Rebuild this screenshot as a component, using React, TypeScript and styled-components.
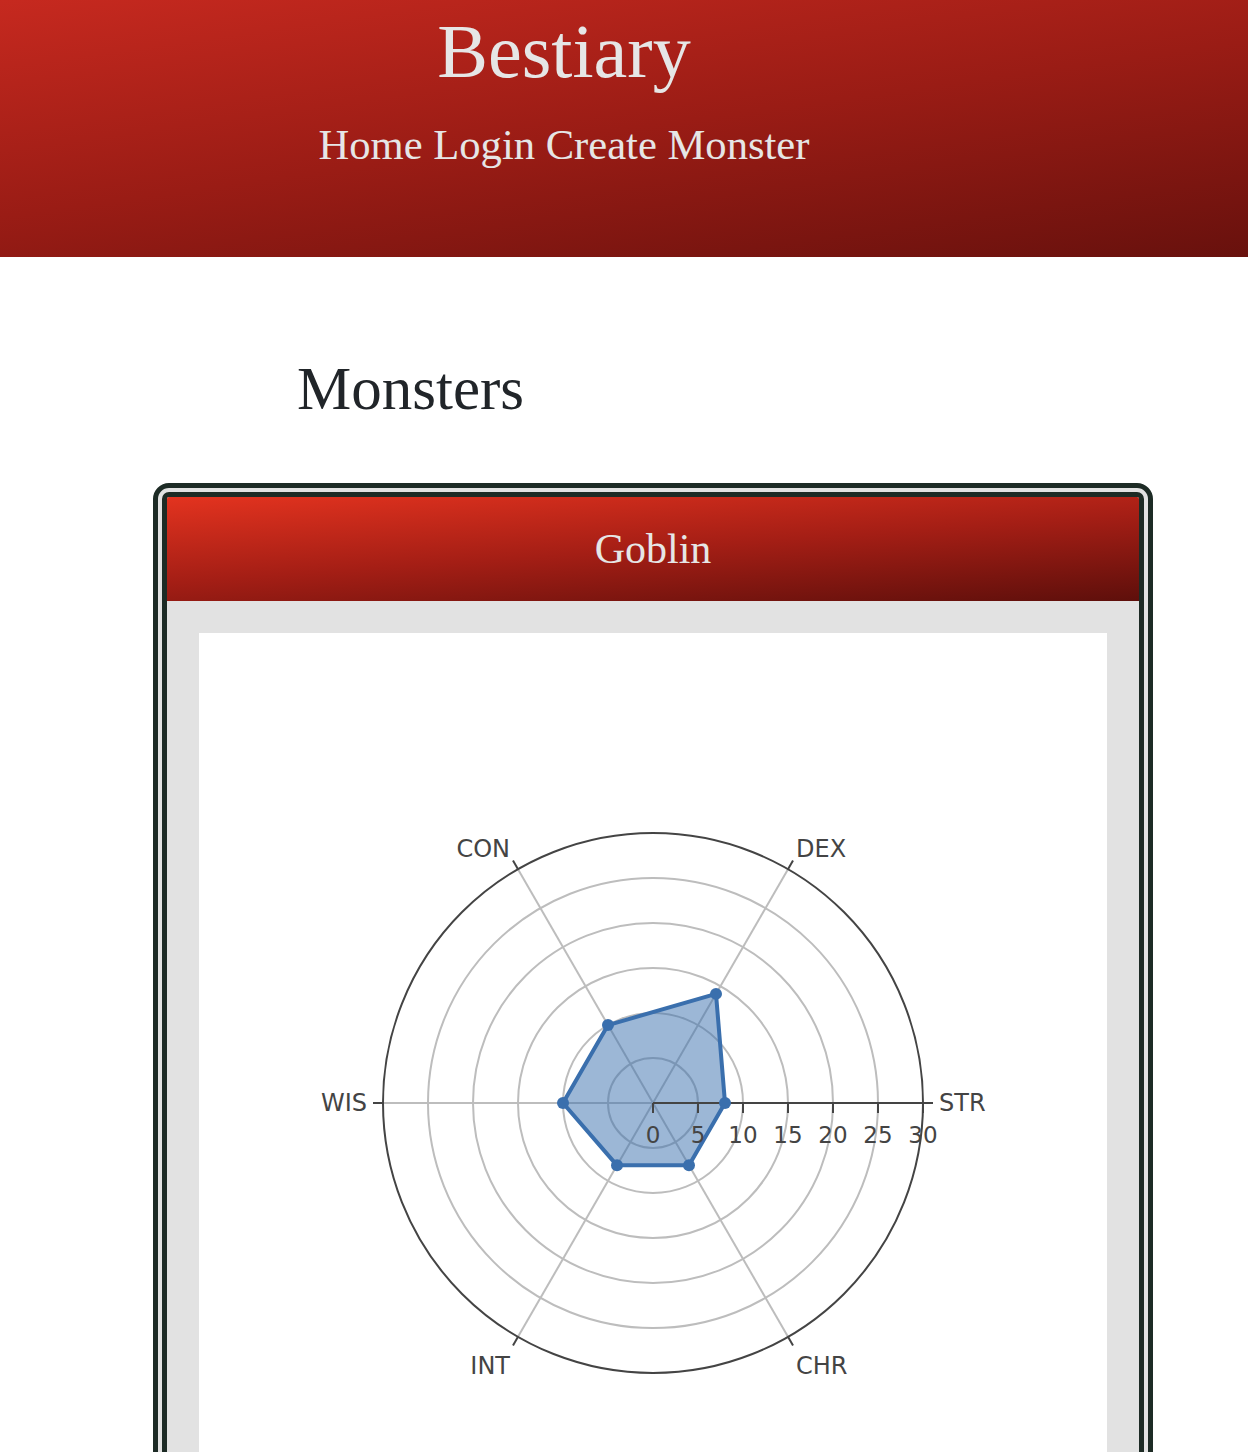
import styled, { createGlobalStyle } from "styled-components";

const GlobalStyle = createGlobalStyle`
  body {
    margin: 0;
    background: #fff;
    font-family: "Liberation Serif", "Times New Roman", serif;
    color: #212529;
  }
`;

const SiteHeader = styled.header`
  height: 257px;
  box-sizing: border-box;
  padding: 8px 120px 0 0;
  background: linear-gradient(172deg, #c6291f 0%, #9a1c15 50%, #68110d 100%);
  text-align: center;
  color: #e6e6e6;
`;

const SiteTitle = styled.h1`
  margin: 0;
  font-size: 76px;
  font-weight: 400;
  line-height: 1.15;
`;

const Nav = styled.nav`
  margin-top: 26px;
  font-size: 42.6px;
  line-height: 1.15;
`;

const NavLink = styled.a`
  color: inherit;
  text-decoration: none;
`;

const Main = styled.main`
  width: 1000px;
  margin: 0 0 0 153px;
  padding-top: 97px;
`;

const PageTitle = styled.h2`
  margin: 0 0 59px 0;
  padding-left: 144px;
  font-size: 61px;
  font-weight: 400;
  line-height: 1.15;
  color: #212529;
`;

const Card = styled.section`
  border: 5px solid #1d2b25;
  border-radius: 16px;
  padding: 4px;
  background: #e2e2e2;
`;

const CardInner = styled.div`
  border: 5px solid #1d2b25;
  border-radius: 7px;
  overflow: hidden;
  background: #e2e2e2;
`;

const CardHeader = styled.div`
  height: 104px;
  display: flex;
  align-items: center;
  justify-content: center;
  background: linear-gradient(176deg, #e3331f 0%, #a41e15 50%, #5e0f0b 100%);
  color: #e6e6e6;
  font-size: 42px;
  line-height: 1;
`;

const CardBody = styled.div`
  padding: 32px;
`;

const ChartPanel = styled.div`
  background: #fff;
  height: 940px;
`;

type Stat = { label: string; value: number };

const stats: Stat[] = [
  { label: "STR", value: 8 },
  { label: "DEX", value: 14 },
  { label: "CON", value: 10 },
  { label: "WIS", value: 10 },
  { label: "INT", value: 8 },
  { label: "CHR", value: 8 },
];

const RadarChart = ({ data }: { data: Stat[] }) => {
  const cx = 454;
  const cy = 470;
  const R = 270;
  const max = 30;
  const scale = R / max;
  const rings = [5, 10, 15, 20, 25];
  const pt = (i: number, v: number) => {
    const a = (i * 60 * Math.PI) / 180;
    return [cx + v * scale * Math.cos(a), cy - v * scale * Math.sin(a)];
  };
  const poly = data.map((d, i) => pt(i, d.value).join(",")).join(" ");

  return (
    <svg width="908" height="940" viewBox="0 0 908 940">
      {rings.map((r) => (
        <circle key={r} cx={cx} cy={cy} r={r * scale} fill="none" stroke="#bdbdbd" strokeWidth="2" />
      ))}
      {data.map((d, i) => {
        const [x, y] = pt(i, max);
        return <line key={d.label} x1={cx} y1={cy} x2={x} y2={y} stroke="#bdbdbd" strokeWidth="2" />;
      })}
      <polygon points={poly} fill="rgba(58,111,173,0.5)" stroke="#3a6fad" strokeWidth="4" strokeLinejoin="round" />
      <circle cx={cx} cy={cy} r={R} fill="none" stroke="#444" strokeWidth="2" />
      {data.map((d, i) => {
        const a = (i * 60 * Math.PI) / 180;
        const c = Math.cos(a);
        const s = Math.sin(a);
        const lx = cx + c * 280 + c * 6;
        const ly = s > 0.1 ? cy - 280 * s - 4 : s < -0.1 ? cy - 280 * s + 29 : cy + 8;
        const anchor = c > 0.1 ? "start" : c < -0.1 ? "end" : "middle";
        return (
          <g key={d.label}>
            <line
              x1={cx + R * c}
              y1={cy - R * s}
              x2={cx + (R + 10) * c}
              y2={cy - (R + 10) * s}
              stroke="#444"
              strokeWidth="2"
            />
            <text x={lx} y={ly} textAnchor={anchor} fontSize="24" fill="#444" fontFamily="'DejaVu Sans', Verdana, sans-serif">
              {d.label}
            </text>
          </g>
        );
      })}
      <line x1={cx} y1={cy} x2={cx + R} y2={cy} stroke="#444" strokeWidth="2" />
      {[0, 5, 10, 15, 20, 25, 30].map((v) => (
        <g key={v}>
          <line x1={cx + v * scale} y1={cy} x2={cx + v * scale} y2={cy + 10} stroke="#444" strokeWidth="2" />
          <text x={cx + v * scale} y={cy + 40} textAnchor="middle" fontSize="23" fill="#444" fontFamily="'DejaVu Sans', Verdana, sans-serif">
            {v}
          </text>
        </g>
      ))}
      {data.map((d, i) => {
        const [x, y] = pt(i, d.value);
        return <circle key={d.label} cx={x} cy={y} r="6" fill="#3a6fad" />;
      })}
    </svg>
  );
};

export default function App() {
  return (
    <>
      <GlobalStyle />
      <SiteHeader>
        <SiteTitle>Bestiary</SiteTitle>
        <Nav>
          <NavLink href="#">Home</NavLink> <NavLink href="#">Login</NavLink>{" "}
          <NavLink href="#">Create Monster</NavLink>
        </Nav>
      </SiteHeader>
      <Main>
        <PageTitle>Monsters</PageTitle>
        <Card>
          <CardInner>
            <CardHeader>Goblin</CardHeader>
            <CardBody>
              <ChartPanel>
                <RadarChart data={stats} />
              </ChartPanel>
            </CardBody>
          </CardInner>
        </Card>
      </Main>
    </>
  );
}
